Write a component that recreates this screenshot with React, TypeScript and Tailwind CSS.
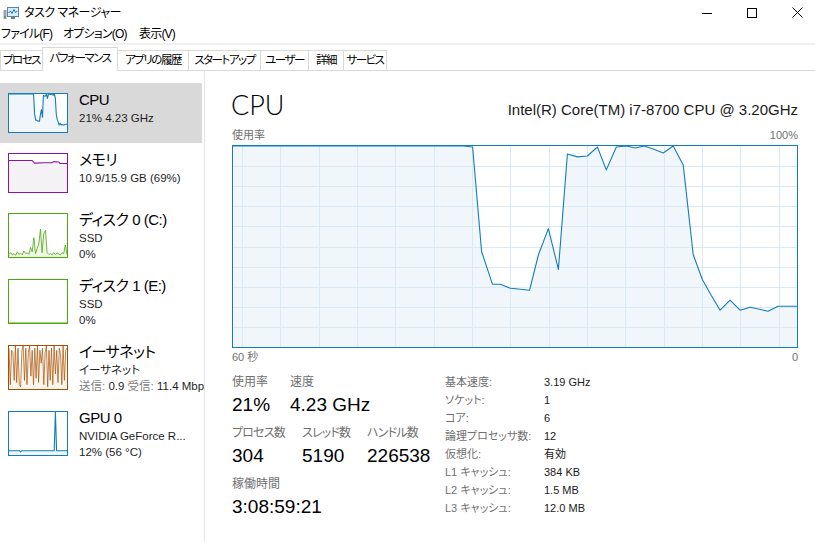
import React from 'react';

type Pt = [number, number];

// usage history, as pixel samples of the main 565x202 plot area
const CPU_RAW: Pt[] = [
  [0, 0], [231, 0], [240, 1], [249, 106], [260, 139], [268, 139], [278, 143], [288, 144],
  [297, 145], [306, 109], [316, 83], [326, 124], [335, 8], [345, 11], [355, 10], [365, 1],
  [374, 24], [384, 1], [394, 0], [403, 2], [412, 0], [421, 3], [431, 7], [441, 0], [451, 19],
  [461, 109], [470, 134], [479, 150], [488, 165], [498, 155], [508, 165], [518, 162],
  [536, 166], [546, 161], [565, 161],
];
const CPU: Pt[] = CPU_RAW.map(([x, y]) => [x / 565, 1 - y / 202]);

const MEM: Pt[] = [
  [0, 0.83], [0.4, 0.83], [0.44, 0.76], [0.6, 0.77], [0.74, 0.77], [0.77, 0.8], [0.86, 0.79],
  [0.88, 0.75], [1, 0.75],
];

const DISK0: Pt[] = [
  0.06, 0.1, 0.05, 0.08, 0.04, 0.12, 0.06, 0.09, 0.05, 0.14, 0.08, 0.1, 0.06, 0.22, 0.12, 0.45,
  0.08, 0.2, 0.3, 0.65, 0.1, 0.55, 0.62, 0.1, 0.06, 0.08, 0.05, 0.1, 0.06, 0.09, 0.07, 0.05,
  0.1, 0.08, 0.28, 0.06,
].map((v, i, a) => [i / (a.length - 1), v]);

const NET: Pt[] = [
  0.95, 0.1, 0.9, 0.85, 0.2, 1, 0.15, 0.95, 0.1, 0.05, 0.9, 1, 0.2, 0.95, 0.1, 0.85, 1, 0.3,
  0.9, 0.1, 0.95, 0.25, 1, 0.15, 0.9, 0.6, 0.95, 0.1, 0.85, 1, 0.05, 0.9, 0.2, 0.95, 0.1, 1,
  0.35, 0.9, 0.15, 0.95, 0.8, 0.1, 1, 0.2, 0.9, 0.95,
].map((v, i, a) => [i / (a.length - 1), v]);

const GPU: Pt[] = [
  [0, 0.1], [0.18, 0.1], [0.2, 0.07], [0.22, 0.1], [0.78, 0.1], [0.8, 1], [0.82, 0.1], [1, 0.1],
];

interface GraphProps {
  w: number;
  h: number;
  data: Pt[];
  stroke: string;
  fill: string;
  grid?: boolean;
  lineWidth?: number;
}

const Graph: React.FC<GraphProps> = ({ w, h, data, stroke, fill, grid, lineWidth = 1.1 }) => {
  const iw = w - 2;
  const ih = h - 2;
  const pts = data.map(([t, v]) => `${(1 + t * iw).toFixed(1)},${(1 + (1 - v) * ih).toFixed(1)}`);
  const line = 'M' + pts.join(' L');
  const area = `${line} L${1 + iw},${1 + ih} L1,${1 + ih} Z`;

  return (
    <svg width={w} height={h} className="block shrink-0">
      <rect x={0} y={0} width={w} height={h} fill="#fff" />
      <path d={area} fill={fill} />
      {grid &&
        Array.from({ length: 9 }, (_, k) => (
          <line
            key={`h${k}`}
            x1={1}
            x2={w - 1}
            y1={Math.round(1 + ((k + 1) * ih) / 10) + 0.5}
            y2={Math.round(1 + ((k + 1) * ih) / 10) + 0.5}
            stroke="#d9eaf4"
          />
        ))}
      {grid &&
        Array.from({ length: 15 }, (_, k) => (
          <line
            key={`v${k}`}
            x1={Math.round(10 + k * 38.33) + 0.5}
            x2={Math.round(10 + k * 38.33) + 0.5}
            y1={1}
            y2={h - 1}
            stroke="#d9eaf4"
          />
        ))}
      <path d={line} fill="none" stroke={stroke} strokeWidth={lineWidth} strokeLinejoin="round" />
      <rect x={0.5} y={0.5} width={w - 1} height={h - 1} fill="none" stroke={stroke} />
    </svg>
  );
};

const AppIcon = () => (
  <svg width="16" height="16" viewBox="0 0 16 16" className="block">
    <rect x="0.5" y="5" width="3" height="9" fill="#9aa3ad" />
    <rect x="1" y="11" width="2" height="2" fill="#4caf50" />
    <rect x="4.5" y="2.5" width="11" height="9" fill="#d6ecfb" stroke="#6d7f92" />
    <path d="M5.5 8 L7.5 6 L9 8.5 L11 4.5 L12.5 7.5 L14.5 6" fill="none" stroke="#1a7ad0" strokeWidth="1" />
    <rect x="8" y="12" width="4" height="2" fill="#6d7f92" />
  </svg>
);

const WindowControls = () => (
  <div className="ml-auto flex items-center gap-[35px] pr-[12px]">
    <svg width="10" height="10" className="block">
      <line x1="0" y1="5.5" x2="10" y2="5.5" stroke="#000" />
    </svg>
    <svg width="10" height="10" className="block">
      <rect x="0.5" y="0.5" width="9" height="9" fill="none" stroke="#000" />
    </svg>
    <svg width="11" height="11" className="block">
      <path d="M0.5 0.5 L10.5 10.5 M10.5 0.5 L0.5 10.5" stroke="#000" />
    </svg>
  </div>
);

const tabs = [
  { label: 'プロセス', w: 'w-[43px]' },
  { label: 'パフォーマンス', w: 'w-[76px]', active: true },
  { label: 'アプリの履歴', w: 'w-[71px]' },
  { label: 'スタートアップ', w: 'w-[72px]' },
  { label: 'ユーザー', w: 'w-[48px]' },
  { label: '詳細', w: 'w-[35px]' },
  { label: 'サービス', w: 'w-[43px]' },
];

interface SideItemProps {
  h: string;
  thumb: React.ReactNode;
  title: string;
  lines: React.ReactNode[];
  selected?: boolean;
}

const SideItem: React.FC<SideItemProps> = ({ h, thumb, title, lines, selected }) => (
  <div className={`flex ${h} w-[202px] pl-[8px] pt-[10px] ${selected ? 'bg-[#d9d9d9]' : ''}`}>
    {thumb}
    <div className="ml-[11px] -mt-[3px] whitespace-nowrap">
      <div className="text-[15px] leading-[20px] tracking-[-0.5px] text-black">{title}</div>
      {lines.map((l, i) => (
        <div key={i} className="text-[11.5px] leading-[16px] text-[#1e1e1e]">
          {l}
        </div>
      ))}
    </div>
  </div>
);

const specs: [string, string][] = [
  ['基本速度:', '3.19 GHz'],
  ['ソケット:', '1'],
  ['コア:', '6'],
  ['論理プロセッサ数:', '12'],
  ['仮想化:', '有効'],
  ['L1 キャッシュ:', '384 KB'],
  ['L2 キャッシュ:', '1.5 MB'],
  ['L3 キャッシュ:', '12.0 MB'],
];

export default function App() {
  return (
    <div className="h-[542px] w-[815px] overflow-hidden bg-white text-black font-['Liberation_Sans','Noto_Sans_CJK_JP',sans-serif] [font-feature-settings:'palt']">
      {/* title bar */}
      <div className="flex h-[25px] items-center">
        <div className="ml-[3px]">
          <AppIcon />
        </div>
        <span className="ml-[5px] text-[12px] tracking-[-0.5px]">タスク マネージャー</span>
        <WindowControls />
      </div>

      {/* menu */}
      <div className="flex h-[18px] items-center text-[12px] leading-[18px] tracking-[-0.8px]">
        <span className="ml-[1px] w-[62px]">ファイル(F)</span>
        <span className="w-[76px]">オプション(O)</span>
        <span>表示(V)</span>
      </div>
      <div className="h-[2px] bg-[#f0f0f0]" />

      {/* tabs */}
      <div className="flex h-[26px] items-end border-b border-[#d9d9d9]">
        {tabs.map((t, i) => (
          <div
            key={t.label}
            className={`${t.w} flex shrink-0 items-center justify-center whitespace-nowrap border-t border-r border-[#d9d9d9] text-[11.5px] tracking-[-1.5px] ${
              i === 0 ? 'border-l' : ''
            } ${t.active ? 'relative -mb-px -ml-px h-[24px] border-l bg-white pb-[2px]' : 'h-[20px] bg-white'}`}
          >
            {t.label}
          </div>
        ))}
      </div>

      <div className="flex h-[471px]">
        {/* sidebar */}
        <aside className="w-[205px] shrink-0 overflow-hidden border-r border-[#e5e5e5] pt-[12px]">
          <SideItem
            h="h-[60px]"
            selected
            thumb={<Graph w={60} h={40} data={CPU} stroke="#117dbb" fill="#f1f6fa" />}
            title="CPU"
            lines={['21%  4.23 GHz']}
          />
          <SideItem
            h="h-[60px]"
            thumb={<Graph w={60} h={40} data={MEM} stroke="#8b12ae" fill="#f4f2f4" />}
            title="メモリ"
            lines={['10.9/15.9 GB (69%)']}
          />
          <SideItem
            h="h-[66px]"
            thumb={<Graph w={60} h={45} data={DISK0} stroke="#4da60c" fill="#eff7e9" lineWidth={0.8} />}
            title="ディスク 0 (C:)"
            lines={['SSD', '0%']}
          />
          <SideItem
            h="h-[66px]"
            thumb={<Graph w={60} h={45} data={[[0, 0], [1, 0]]} stroke="#4da60c" fill="#fff" />}
            title="ディスク 1 (E:)"
            lines={['SSD', '0%']}
          />
          <SideItem
            h="h-[66px]"
            thumb={<Graph w={60} h={45} data={NET} stroke="#a74f01" fill="#fdf6ef" lineWidth={0.7} />}
            title="イーサネット"
            lines={[
              'イーサネット',
              <>
                <span className="text-[#808080]">送信:</span> 0.9{' '}
                <span className="text-[#808080]">受信:</span> 11.4 Mbps
              </>,
            ]}
          />
          <SideItem
            h="h-[66px]"
            thumb={<Graph w={60} h={45} data={GPU} stroke="#117dbb" fill="#f1f6fa" />}
            title="GPU 0"
            lines={['NVIDIA GeForce R...', '12%  (56 °C)']}
          />
        </aside>

        {/* detail panel */}
        <main className="flex-1 pl-[26px] pr-[18px]">
          <div className="flex h-[51px] items-baseline justify-between pt-[18px]">
            <span className="font-['Lato',sans-serif] text-[27px] font-light leading-[32px]">CPU</span>
            <span className="text-[15px] leading-[20px] text-[#1a1a1a]">
              Intel(R) Core(TM) i7-8700 CPU @ 3.20GHz
            </span>
          </div>
          <div className="ml-[1px] mt-[6px] flex justify-between text-[11px] leading-[14px] text-[#707070]">
            <span>使用率</span>
            <span>100%</span>
          </div>
          <div className="ml-[1px] mt-[3px]">
            <Graph w={566} h={203} data={CPU} stroke="#117dbb" fill="#f1f6fa" grid />
          </div>
          <div className="ml-[1px] mt-[2px] flex justify-between text-[11px] leading-[14px] text-[#707070]">
            <span>60 秒</span>
            <span>0</span>
          </div>

          <div className="ml-[1px] mt-[10px] flex">
            <div className="w-[213px] shrink-0">
              <div className="flex">
                <div className="w-[58px]">
                  <div className="text-[12px] leading-[16px] text-[#707070]">使用率</div>
                  <div className="mt-[3px] text-[19px] leading-[24px]">21%</div>
                </div>
                <div>
                  <div className="text-[12px] leading-[16px] text-[#707070]">速度</div>
                  <div className="mt-[3px] text-[19px] leading-[24px]">4.23 GHz</div>
                </div>
              </div>
              <div className="mt-[8px] flex">
                <div className="w-[70px]">
                  <div className="text-[12px] leading-[16px] tracking-[-0.8px] text-[#707070]">プロセス数</div>
                  <div className="mt-[3px] text-[19px] leading-[24px]">304</div>
                </div>
                <div className="w-[65px]">
                  <div className="text-[12px] leading-[16px] tracking-[-0.8px] text-[#707070]">スレッド数</div>
                  <div className="mt-[3px] text-[19px] leading-[24px]">5190</div>
                </div>
                <div>
                  <div className="text-[12px] leading-[16px] tracking-[-0.8px] text-[#707070]">ハンドル数</div>
                  <div className="mt-[3px] text-[19px] leading-[24px]">226538</div>
                </div>
              </div>
              <div className="mt-[8px]">
                <div className="text-[12px] leading-[16px] text-[#707070]">稼働時間</div>
                <div className="mt-[3px] text-[19px] leading-[24px]">3:08:59:21</div>
              </div>
            </div>

            <div className="-mt-px">
              {specs.map(([k, v]) => (
                <div key={k} className="flex h-[18px] items-center text-[11px]">
                  <span className="w-[99px] text-[#707070]">{k}</span>
                  <span className="text-[#1a1a1a]">{v}</span>
                </div>
              ))}
            </div>
          </div>
        </main>
      </div>
    </div>
  );
}
